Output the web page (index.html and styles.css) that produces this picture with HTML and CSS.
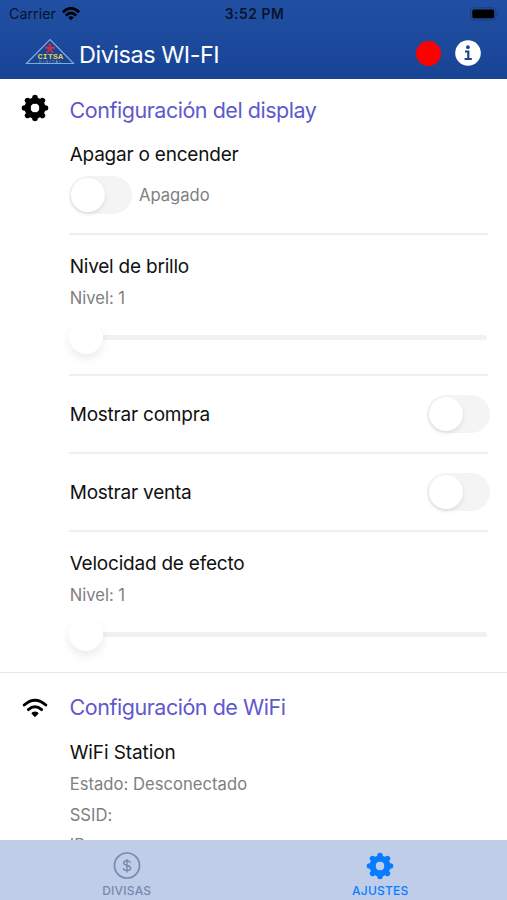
FILE: index.html
```html
<!DOCTYPE html>
<html lang="es">
<head>
<meta charset="utf-8">
<title>Divisas WI-FI</title>
<link rel="stylesheet" href="styles.css">
</head>
<body>
<svg class="defs" width="0" height="0">
  <symbol id="gear" viewBox="-14 -14 28 28">
    <path fill="none" stroke="currentColor" stroke-width="5.6" stroke-linecap="round" d="M0-10.5V-7M0 10.5V7M-10.5 0H-7M10.5 0H7M-7.4-7.4l2.2 2.2M7.4 7.4l-2.2-2.2M-7.4 7.4l2.2-2.2M7.4-7.4l-2.2 2.2"/>
    <circle r="7.5" fill="none" stroke="currentColor" stroke-width="6"/>
  </symbol>
  <symbol id="wifi" viewBox="0 0 26 20">
    <g fill="none" stroke="currentColor" stroke-width="2.9" stroke-linecap="round">
      <path d="M2.2 7Q13-2.5 23.8 7M6.4 11.6Q13 5.9 19.6 11.6"/>
    </g>
    <path fill="currentColor" d="M9.4 15.6Q9.9 13.4 13 13.4T16.6 15.6L13.8 18.6Q13 19.3 12.2 18.6Z"/>
  </symbol>
</svg>
<div class="app">
  <header class="header">
    <div class="status">
      <div class="carrier"><span>Carrier</span>
        <svg width="18" height="14" viewBox="0 0 18 14"><g fill="none" stroke="#000" stroke-width="2.8"><path d="M.8 5.1Q9-2.4 17.2 5.1M3.8 8.5Q9 3.6 14.2 8.5"/></g><path d="M6.2 10.3Q9 8 11.8 10.3L9 13.3Z"/></svg>
      </div>
      <span class="time">3:52 PM</span>
      <svg class="battery" width="30" height="14" viewBox="0 0 30 14"><rect x=".5" y=".8" width="25.4" height="12.2" rx="3.2" fill="none" stroke="#193d80"/><rect x="2.3" y="2.6" width="21.8" height="8.6" rx="1.6"/><path fill="#193d80" d="M27.3 4.5Q29.4 6.8 27.3 9Z"/></svg>
    </div>
    <div class="toolbar">
      <svg class="logo" width="50" height="28" viewBox="0 0 50 28">
        <path d="M25 1.5L48.5 25.5H1.5Z" fill="#174591" stroke="#82a8df" stroke-width="1.2"/>
        <circle cx="25" cy="7" r="1.5" fill="#d72e45"/>
        <path d="M20 9.8h10M25 9v3.5M24.6 11.5l-2.8 3.3M25.4 11.5l2.8 3.3" fill="none" stroke="#d72e45" stroke-width="1.9"/>
        <text x="12.5" y="21.2" textLength="25.5" lengthAdjust="spacingAndGlyphs" class="logo-name">CITSA</text>
        <text x="14" y="25" textLength="22" class="logo-sub">DIGITAL</text>
      </svg>
      <h1>Divisas WI-FI</h1>
      <i class="dot"></i>
      <svg class="info" width="26" height="26" viewBox="0 0 26 26"><circle cx="13" cy="13" r="12.8" fill="#fff"/><circle cx="12.9" cy="7.2" r="1.9" fill="#1a4795"/><path d="M10 11.5h3.3v7.5M9.6 19h7.2" fill="none" stroke="#1a4795" stroke-width="2.2"/></svg>
    </div>
  </header>
  <main class="content">
    <section class="section">
      <svg class="lead" width="28" height="28"><use href="#gear"/></svg>
      <h2>Configuración del display</h2>
      <div class="item power">
        <h3>Apagar o encender</h3>
        <div class="power-row"><i class="toggle"></i><span class="state">Apagado</span></div>
      </div>
      <div class="item range">
        <h3>Nivel de brillo</h3>
        <p>Nivel: 1</p>
        <div class="slider"><i class="knob"></i></div>
      </div>
      <div class="item switch"><h3>Mostrar compra</h3><i class="toggle"></i></div>
      <div class="item switch"><h3>Mostrar venta</h3><i class="toggle"></i></div>
      <div class="item range last">
        <h3>Velocidad de efecto</h3>
        <p>Nivel: 1</p>
        <div class="slider"><i class="knob"></i></div>
      </div>
    </section>
    <section class="section wifi">
      <svg class="lead" width="26" height="20"><use href="#wifi"/></svg>
      <h2>Configuración de WiFi</h2>
      <div class="item station">
        <h3>WiFi Station</h3>
        <p>Estado: Desconectado</p>
        <p>SSID:</p>
        <p>IP:</p>
      </div>
    </section>
  </main>
  <nav class="tabs">
    <div class="tab">
      <svg width="28" height="28" viewBox="0 0 28 28"><circle cx="14" cy="13.5" r="12.5" fill="none" stroke="currentColor" stroke-width="1.7"/><path d="M17.4 10.7C17 9.2 15.7 8.7 14 8.7c-1.9 0-3.3.8-3.3 2.4 0 3.4 6.9 1.5 6.9 5 0 1.6-1.5 2.5-3.6 2.5s-3.5-.9-3.7-2.6M14 7v13.4" fill="none" stroke="currentColor" stroke-width="1.4"/></svg>
      <span>DIVISAS</span>
    </div>
    <div class="tab active">
      <svg width="28" height="28"><use href="#gear"/></svg>
      <span>AJUSTES</span>
    </div>
  </nav>
</div>
</body>
</html>
```
FILE: styles.css
```css
* { box-sizing: border-box; }
body { margin: 0; background: #fff; font-family: Inter, "Liberation Sans", sans-serif; color: #111; }
h1, h2, h3, p { margin: 0; font-weight: 400; white-space: nowrap; }
svg { display: block; flex: none; }
.defs { position: absolute; }
.app { height: 900px; display: flex; flex-direction: column; overflow: hidden; }

.header { flex: none; height: 79px; background: linear-gradient(#214fa3, #174495); }
.status { height: 27px; padding: 0 7px 0 9px; display: grid; grid-template-columns: 1fr auto 1fr; align-items: center; color: #07142d; font-size: 14.3px; }
.carrier { display: flex; align-items: center; gap: 6px; }
.time { font-weight: 600; font-size: 13.8px; letter-spacing: .55px; }
.battery { justify-self: end; }
.toolbar { height: 52px; display: flex; align-items: center; padding: 0 26px 0 25px; color: #fff; }
.toolbar h1 { font-size: 23.5px; margin: 2px auto 0 4px; letter-spacing: -.5px; }
.logo { margin-top: -3px; }
.logo-name { font: bold 7.5px "Liberation Mono", monospace; fill: #e0ce55; }
.logo-sub { font: 3.2px "Liberation Sans", sans-serif; fill: #a3b9d8; }
.dot { width: 25px; height: 25px; border-radius: 50%; background: #f00; margin-right: 14px; }
.info { margin-top: -1px; }

.content { flex: 1; min-height: 0; overflow: hidden; }
.section { position: relative; padding-left: 69px; border-bottom: 1px solid #e6e6e6; height: 594px; }
.section .lead { position: absolute; left: 21px; top: 15px; color: #000; }
.wifi .lead { left: 22px; top: 25px; }
h2 { height: 62px; line-height: 62px; font-size: 21.5px; letter-spacing: -.47px; color: #6058cc; padding-left: .6px; }
.wifi h2 { height: 66px; line-height: 69px; }
h3 { height: 28px; line-height: 28px; font-size: 19px; letter-spacing: -.22px; padding-left: .7px; }
p, .state { font-size: 16.6px; color: #808080; }
p { height: 31px; line-height: 31px; padding-left: .7px; }
.item { margin-right: 19px; border-bottom: 2px solid #efefef; }
.power { height: 94px; }
.power-row { margin-top: 7px; display: flex; align-items: center; gap: 7px; }
.toggle { flex: none; width: 63px; height: 38px; border-radius: 19px; background: #f4f4f4; padding: 2px; display: block; }
.toggle::before { content: ""; display: block; width: 34px; height: 34px; border-radius: 50%; background: #fff; box-shadow: 0 2px 4px rgba(0,0,0,.1); }
.range { height: 141px; padding-top: 18px; }
.range p { margin-top: 2px; }
.slider { height: 34px; margin-top: 6px; display: flex; align-items: center; }
.slider::after { content: ""; flex: 1; height: 5px; border-radius: 0 3px 3px 0; background: #f1f1f1; margin-right: 1px; }
.knob { width: 34px; height: 34px; border-radius: 50%; background: #fff; box-shadow: 0 5px 10px rgba(0,0,0,.08); z-index: 1; }
.switch { height: 78px; display: flex; align-items: center; justify-content: space-between; }
.switch h3 { padding-top: 1px; }
.switch .toggle { margin-right: -2px; }
.last, .station { border: 0; }
.station h3 { letter-spacing: -.1px; }
.station p { height: 30.5px; line-height: 30px; letter-spacing: .03px; }
.station p:first-of-type { margin-top: 2px; }

.tabs { flex: none; height: 60px; display: grid; grid-template-columns: 1fr 1fr; background: #bfcde8; color: #7789af; }
.tab { display: flex; flex-direction: column; align-items: center; padding-top: 12px; font-size: 12px; font-weight: 500; letter-spacing: .2px; }
.tab span { line-height: 16px; margin-top: auto; margin-bottom: 1px; }
.active { color: #087cff; }
```
